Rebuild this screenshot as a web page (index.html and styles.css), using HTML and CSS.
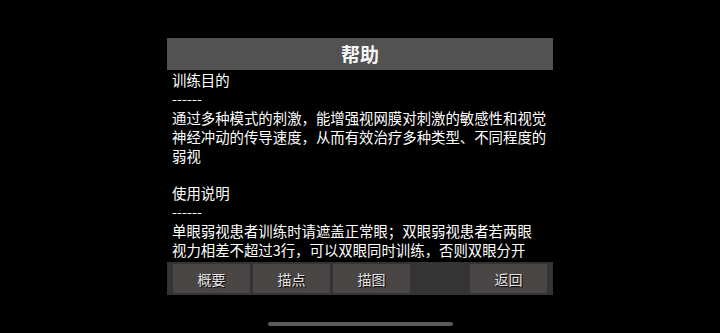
FILE: index.html
```html
<!DOCTYPE html>
<html lang="zh-CN">
<head>
    <meta charset="UTF-8">
    <meta name="viewport" content="width=device-width, initial-scale=1.0">
    <title>帮助</title>
    <link rel="stylesheet" href="styles.css">
</head>
<body>
    <div class="help-panel">
        <div class="help-title">帮助</div>

        <div class="help-content">
            <p class="help-text">训练目的<br>------<br>通过多种模式的刺激，能增强视网膜对刺激的敏感性和视觉<br>神经冲动的传导速度，从而有效治疗多种类型、不同程度的<br>弱视</p>
            <p class="help-text">使用说明<br>------<br>单眼弱视患者训练时请遮盖正常眼；双眼弱视患者若两眼<br>视力相差不超过3行，可以双眼同时训练，否则双眼分开</p>
        </div>

        <div class="button-bar">
            <button class="bar-btn">概要</button>
            <button class="bar-btn">描点</button>
            <button class="bar-btn">描图</button>
            <div class="bar-spacer"></div>
            <button class="bar-btn">返回</button>
        </div>
    </div>

    <div class="home-indicator"></div>
</body>
</html>
```

FILE: styles.css
```css
body {
    margin: 0;
    height: 333px;
    background-color: #000000;
    color: #FFFFFF;
    font-family: "Noto Sans CJK SC", "Noto Sans", sans-serif;
    display: flex;
    flex-direction: column;
    align-items: center;
    padding-top: 38px;
    box-sizing: border-box;
    overflow: hidden;
}

.help-panel {
    width: 386px;
    display: flex;
    flex-direction: column;
}

.help-title {
    height: 32px;
    line-height: 32px;
    background-color: #525252;
    text-align: center;
    font-size: 19px;
    font-weight: bold;
    color: #F4F4F4;
}

.help-content {
    height: 192px;
    overflow: hidden;
    padding: 1px 5px 0 5px;
    box-sizing: border-box;
}

.help-text {
    margin: 0 0 18.9px 0;
    font-size: 14.4px;
    line-height: 18.9px;
    white-space: nowrap;
}

.button-bar {
    display: flex;
    gap: 3px;
    height: 29px;
    padding: 2px 6px 2px 6px;
    background-color: #343434;
}

.bar-btn {
    width: 77px;
    border: none;
    padding: 0;
    background-color: #4B4646;
    color: #E2E2E2;
    font-family: "Noto Sans CJK SC", "Noto Sans", sans-serif;
    font-size: 14px;
    text-shadow: 1px 1px 1px #000000;
}

.bar-spacer {
    flex: 1;
}

.home-indicator {
    width: 185px;
    height: 4px;
    margin-top: 27px;
    border-radius: 2px;
    background-color: #5A5A5A;
}
```
